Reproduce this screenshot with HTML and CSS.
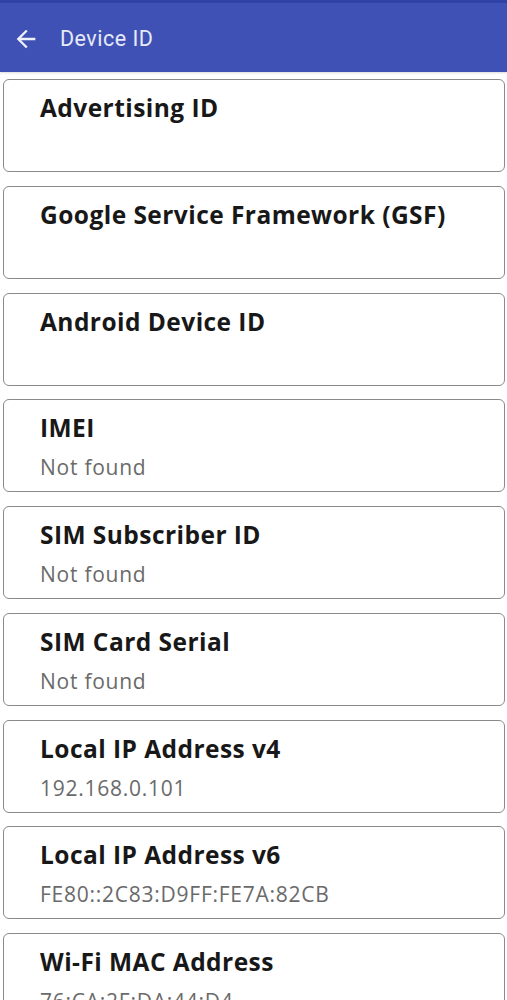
FILE: index.html
```html
<!DOCTYPE html>
<html lang="en">
<head>
<meta charset="utf-8">
<title>Device ID</title>
<link rel="stylesheet" href="styles.css">
</head>
<body>
<header class="appbar">
  <svg class="back" viewBox="0 0 24 24" aria-hidden="true"><path d="M20 11H7.83l5.59-5.59L12 4l-8 8 8 8 1.41-1.41L7.83 13H20v-2z"/></svg>
  <span class="appbar-title">Device ID</span>
</header>
<main class="list">
  <div class="card"><div class="card-title">Advertising ID</div><div class="card-value">&nbsp;</div></div>
  <div class="card"><div class="card-title">Google Service Framework (GSF)</div><div class="card-value">&nbsp;</div></div>
  <div class="card"><div class="card-title">Android Device ID</div><div class="card-value">&nbsp;</div></div>
  <div class="card"><div class="card-title">IMEI</div><div class="card-value">Not found</div></div>
  <div class="card"><div class="card-title">SIM Subscriber ID</div><div class="card-value">Not found</div></div>
  <div class="card"><div class="card-title">SIM Card Serial</div><div class="card-value">Not found</div></div>
  <div class="card"><div class="card-title">Local IP Address v4</div><div class="card-value">192.168.0.101</div></div>
  <div class="card"><div class="card-title">Local IP Address v6</div><div class="card-value">FE80::2C83:D9FF:FE7A:82CB</div></div>
  <div class="card"><div class="card-title">Wi-Fi MAC Address</div><div class="card-value">76:CA:2F:DA:44:D4</div></div>
</main>
</body>
</html>
```

FILE: styles.css
```css
html, body {
  margin: 0;
  padding: 0;
  background: #ffffff;
}

body {
  font-family: "Open Sans", "Liberation Sans", sans-serif;
  overflow: hidden;
}

.appbar {
  box-sizing: border-box;
  height: 72px;
  border-top: 3px solid #3142a6;
  background: #3f51b5;
  display: flex;
  align-items: center;
  padding: 2px 0 0 12px;
  gap: 20px;
  box-shadow: 0 1px 2px rgba(0, 0, 0, 0.15);
}

.back {
  width: 28px;
  height: 28px;
  fill: #eef0fa;
  flex: none;
}

.appbar-title {
  font-family: Roboto, "Liberation Sans", sans-serif;
  font-size: 21.5px;
  letter-spacing: 0.5px;
  color: #e6e9f7;
}

.list {
  display: flex;
  flex-direction: column;
  gap: 13.75px;
  padding: 7px 2px 0 3px;
}

.card {
  box-sizing: border-box;
  height: 93px;
  border: 1.5px solid #8a8a8a;
  border-radius: 6px;
  padding: 12px 0 0 36px;
  flex: none;
}

.card-title {
  font-weight: 700;
  font-size: 24.5px;
  letter-spacing: 0.45px;
  line-height: 32px;
  color: #181818;
  white-space: nowrap;
}

.card-value {
  margin-top: 9px;
  font-size: 21px;
  letter-spacing: 0.75px;
  line-height: 28px;
  color: #6a6a6a;
  white-space: nowrap;
}
```
